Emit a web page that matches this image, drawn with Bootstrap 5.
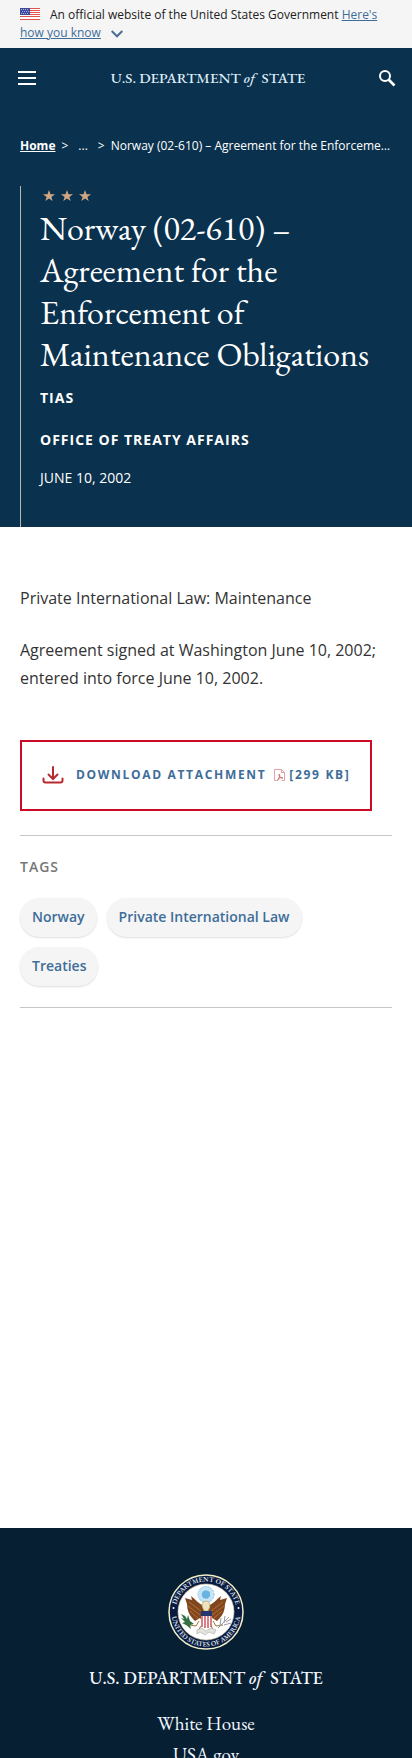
<!DOCTYPE html>
<html lang="en">
<head>
<meta charset="utf-8">
<meta name="viewport" content="width=device-width, initial-scale=1">
<title>Norway (02-610) – Agreement for the Enforcement of Maintenance Obligations</title>
<link href="https://cdn.jsdelivr.net/npm/bootstrap@5.3.0/dist/css/bootstrap.min.css" rel="stylesheet">
<style>
  :root { --navy: #0a314d; --navy-dark: #071f33; --link: #3e6d99; --red: #cb0a26; }
  body { font-family: "Open Sans", sans-serif; font-size: 16px; line-height: 28px; color: #333; background: #fff; }
  .serif { font-family: "EB Garamond", "Liberation Serif", serif; }
  .gov-banner { background: #f5f5f5; padding: 6px 20px; font-size: 12px; line-height: 18px; color: #212121; }
  .gov-banner a { color: var(--link); }
  .gov-flag { margin-right: 10px; vertical-align: -1px; }
  .gov-chevron { margin-left: 7px; }
  .site-top { background: var(--navy); color: #fff; }
  .site-bar { height: 60px; padding: 0 16px; }
  .bar-btn { background: none; border: 0; padding: 0; line-height: 0; color: #fff; }
  .wordmark { color: #dfedf8; text-decoration: none; font-size: 15px; font-weight: 500; line-height: 24px; white-space: nowrap; }
  .wordmark-lg { color: #f2f8ff; font-size: 18px; }
  .crumbs { padding: 29px 20px 0; font-size: 12px; line-height: 18px; }
  .crumbs ol { gap: 6px; }
  .crumbs a { color: #fff; font-weight: 700; }
  .intro-wrap { padding: 31px 20px 0; }
  .intro { padding: 4px 0 39px 19px; border-left: 1px solid #b6b9a9; }
  .stars { margin-left: 3px; display: block; }
  .page-title { font-size: 34px; line-height: 42px; font-weight: 400; margin: 5px 0 13px; }
  .eyebrow { font-size: 14px; line-height: 20px; font-weight: 700; letter-spacing: 1px; margin-bottom: 22px; }
  .intro-date { font-size: 14px; line-height: 20px; margin-top: -4px; }
  .entry { padding: 57px 20px 0; }
  .entry p { margin-bottom: 24px; }
  .download { border: 2px solid var(--red); padding: 19px 20px 20px; margin-top: 24px; font-size: 12px; font-weight: 700; line-height: 28px; letter-spacing: .14em; color: var(--link); text-decoration: none; }
  .tag-area { margin: 24px 0 520px; padding: 19px 0 21px; border: solid #c4c6c8; border-width: 1px 0; }
  .tag-area h2 { font-size: 14px; line-height: 24px; font-weight: 600; color: #777; letter-spacing: 1px; margin-bottom: 19px; }
  .tag-area ul { gap: 10px; }
  .tag-link { display: block; background: #f5f5f5; border-radius: 20px; padding: 9px 12px 10px; font-size: 14px; line-height: 20px; font-weight: 600; color: var(--link); text-decoration: none; box-shadow: 0 1px 2px #0002; }
  .site-foot { background: var(--navy-dark); padding: 46px 20px 40px; }
  .foot-links { margin-top: 18px; font-size: 19px; line-height: 31px; }
  .foot-links a { color: #f2f8ff; text-decoration: none; }
</style>
</head>
<body>
<div class="gov-banner">
  <svg class="gov-flag" width="20" height="12" viewBox="0 0 20 12" aria-hidden="true"><path fill="#fff" d="M0 0h20v12H0z"/><path stroke="#e0544d" d="M0 .5h20M0 2.5h20M0 4.5h20M0 6.5h20M0 8.500h20M0 11.500h20"/><path fill="#3f4a9f" d="M0 0h10v7H0z"/><path stroke="#aab2dd" stroke-dasharray="1 1" d="M1 1.500h8M2 3.500h8M1 5.500h8"/></svg>An official website of the United States Government <a href="#how">Here's how you know</a>
  <svg class="gov-chevron" width="12" height="8" viewBox="0 0 12 8" fill="none" stroke="#4c6f99" stroke-width="2" aria-hidden="true"><path d="M.7 1 6 6.300 11.300 1"/></svg>
</div>
<header class="site-top">
  <div class="site-bar d-flex align-items-center justify-content-between">
    <button class="bar-btn" type="button" aria-label="Menu"><svg width="22" height="16" viewBox="0 0 22 16" stroke="#fff" stroke-width="2"><path d="M2 2h18M2 8h18M2 14h18"/></svg></button>
    <a class="wordmark serif" href="#home">U.S. DEPARTMENT <i>of</i>&nbsp; STATE</a>
    <button class="bar-btn" type="button" aria-label="Search"><svg width="18" height="18" viewBox="0 0 18 18" fill="none" stroke="#fff"><circle cx="7" cy="7" r="5" stroke-width="2"/><path d="m10.500 10.500 6 6" stroke-width="2.600"/></svg></button>
  </div>
  <nav class="crumbs" aria-label="Breadcrumb">
    <ol class="list-unstyled d-flex mb-0 text-nowrap">
      <li><a href="#home">Home</a></li>
      <li class="pe-1">&gt;</li>
      <li class="pe-1">...</li>
      <li>&gt;</li>
      <li class="text-truncate" aria-current="page">Norway (02-610) – Agreement for the Enforcement of Maintenance Obligations</li>
    </ol>
  </nav>
  <div class="intro-wrap">
    <div class="intro">
      <svg class="stars" width="50" height="12" viewBox="0 0 50 12" fill="#d0a683" aria-hidden="true"><path id="star" d="m6 0 1.500 4.200H12L8.400 6.900 9.700 11 6 8.500 2.300 11l1.300-4.100L0 4.200h4.500z"/><use href="#star" x="18"/><use href="#star" x="36"/></svg>
      <h1 class="page-title serif">Norway (02-610) – Agreement for the Enforcement of Maintenance Obligations</h1>
      <p class="eyebrow">TIAS</p>
      <p class="eyebrow">OFFICE OF TREATY AFFAIRS</p>
      <p class="intro-date mb-0">JUNE 10, 2002</p>
    </div>
  </div>
</header>
<main class="entry">
  <p>Private International Law: Maintenance</p>
  <p>Agreement signed at Washington June 10, 2002; entered into force June 10, 2002.</p>
  <a class="download d-inline-flex align-items-center" href="#file">
    <svg class="me-2" width="22" height="18" viewBox="0 0 22 18" fill="none" stroke="#b52b30" stroke-width="2" stroke-linecap="round" aria-hidden="true"><path d="M11 1v11M6.500 8.500 11 13l4.500-4.500M1.500 12.500v2q0 2 2 2h15q2 0 2-2v-2"/></svg>
    <span class="ms-1">DOWNLOAD ATTACHMENT</span>
    <svg class="ms-2 me-1" width="11" height="13" viewBox="0 0 11 13" fill="none" stroke="#e5a0a2" aria-hidden="true"><path d="M2.500 11.500h-2v-11h7l3 3v8h-3M7.500.5v3h3"/><path stroke="#cf6d70" d="M3.500 11.500c1-1 3-5 2-6.500-1.500 1 1 4.500 3.500 4-2-1-5 0-5.500 2.500z"/></svg>
    <span>[299 KB]</span>
  </a>
  <section class="tag-area">
    <h2>TAGS</h2>
    <ul class="list-unstyled d-flex flex-wrap mb-0 pe-3">
      <li><a class="tag-link" href="#norway">Norway</a></li>
      <li><a class="tag-link" href="#law">Private International Law</a></li>
      <li><a class="tag-link" href="#treaties">Treaties</a></li>
    </ul>
  </section>
</main>
<footer class="site-foot text-center">
  <svg class="d-block mx-auto" width="76" height="76" viewBox="0 0 76 76" role="img" aria-label="Department of State seal">
    <defs><path id="arcTop" d="M7.500 38a30.500 30.500 0 0 1 61 0"/><path id="arcBottom" d="M3.500 38a34.500 34.500 0 0 0 69 0"/></defs>
    <circle cx="38" cy="38" r="37" fill="#0b1b40" stroke="#f0efc8" stroke-width="1.500"/>
    <circle cx="38" cy="38" r="28" fill="#fff" stroke="#d9d7b0" stroke-width=".6"/>
    <g class="serif" font-size="7" font-weight="600" fill="#dbe2ea" text-anchor="middle"><text><textPath href="#arcTop" startOffset="50%">DEPARTMENT OF STATE</textPath></text><text><textPath href="#arcBottom" startOffset="50%">UNITED STATES OF AMERICA</textPath></text></g>
    <circle cx="5.500" cy="34" r="1" fill="#fff"/><circle cx="70.500" cy="34" r="1" fill="#fff"/>
    <circle cx="38" cy="20.500" r="8" fill="#c5e5f7" stroke="#8bc5e8" stroke-dasharray="2 1"/><circle cx="38" cy="20.500" r="4.500" fill="#69b3e2" stroke="#e7f5fd" stroke-dasharray="1 1"/>
    <path fill="#80461e" d="M36 32c-5-2-9-7-13-10l1 4-7-2 2 6c0 6 2 11 6 15l2 2 5-3 4 5zM40 32c5-2 9-7 13-10l-1 4 7-2-2 6c0 6-2 11-6 15l-2 2-5-3-4 5z"/>
    <path fill="none" stroke="#bd7b3e" stroke-width=".8" d="M21 28l12 9M20 32l12 9M22 37l9 8M55 28l-12 9M56 32l-12 9M54 37l-9 8"/>
    <path fill="#eee5c0" stroke="#b69b52" stroke-width=".6" d="m34 32 1-4 3-1 3 1 1 5-2 4h-4z"/>
    <path fill="#fff" d="M33 38h11v13l-5.500 4-5.500-4z"/><path stroke="#c43c48" stroke-width="1.300" d="M34 42v11M37 42v12M40 42v12M43 42v11"/><path fill="#263670" d="M33 37h11v5H33z"/>
    <path fill="none" stroke="#9b762f" d="m31 47-3 5-7-1M45 47l3 5 7-1M33 52l-3 5M43 52l3 5"/>
    <path fill="#347044" d="m13 40 4 2 2 3 1-4 2 6 4 3-4 1 1 4-5-4-4-2 3-1-4-4 3 1z"/>
    <path fill="none" stroke="#9899a3" d="m50 54 11-11m-9 9 1-8m3 5 1-7m-1 9 7-2m-5-1 5-3"/>
    <path fill="#e5e4dc" stroke="#aaa" stroke-width=".6" d="m29 56 5-2 4 3 5-3 5 2-2 4-5-2-4 3-5-3-3 2z"/>
  </svg>
  <a class="wordmark wordmark-lg serif d-block mt-3" href="#home">U.S. DEPARTMENT <i>of</i>&nbsp; STATE</a>
  <ul class="foot-links serif list-unstyled mb-0">
    <li><a href="#wh">White House</a></li>
    <li><a href="#usa">USA.gov</a></li>
  </ul>
</footer>
<script src="https://cdn.jsdelivr.net/npm/bootstrap@5.3.0/dist/js/bootstrap.bundle.min.js"></script>
</body>
</html>
